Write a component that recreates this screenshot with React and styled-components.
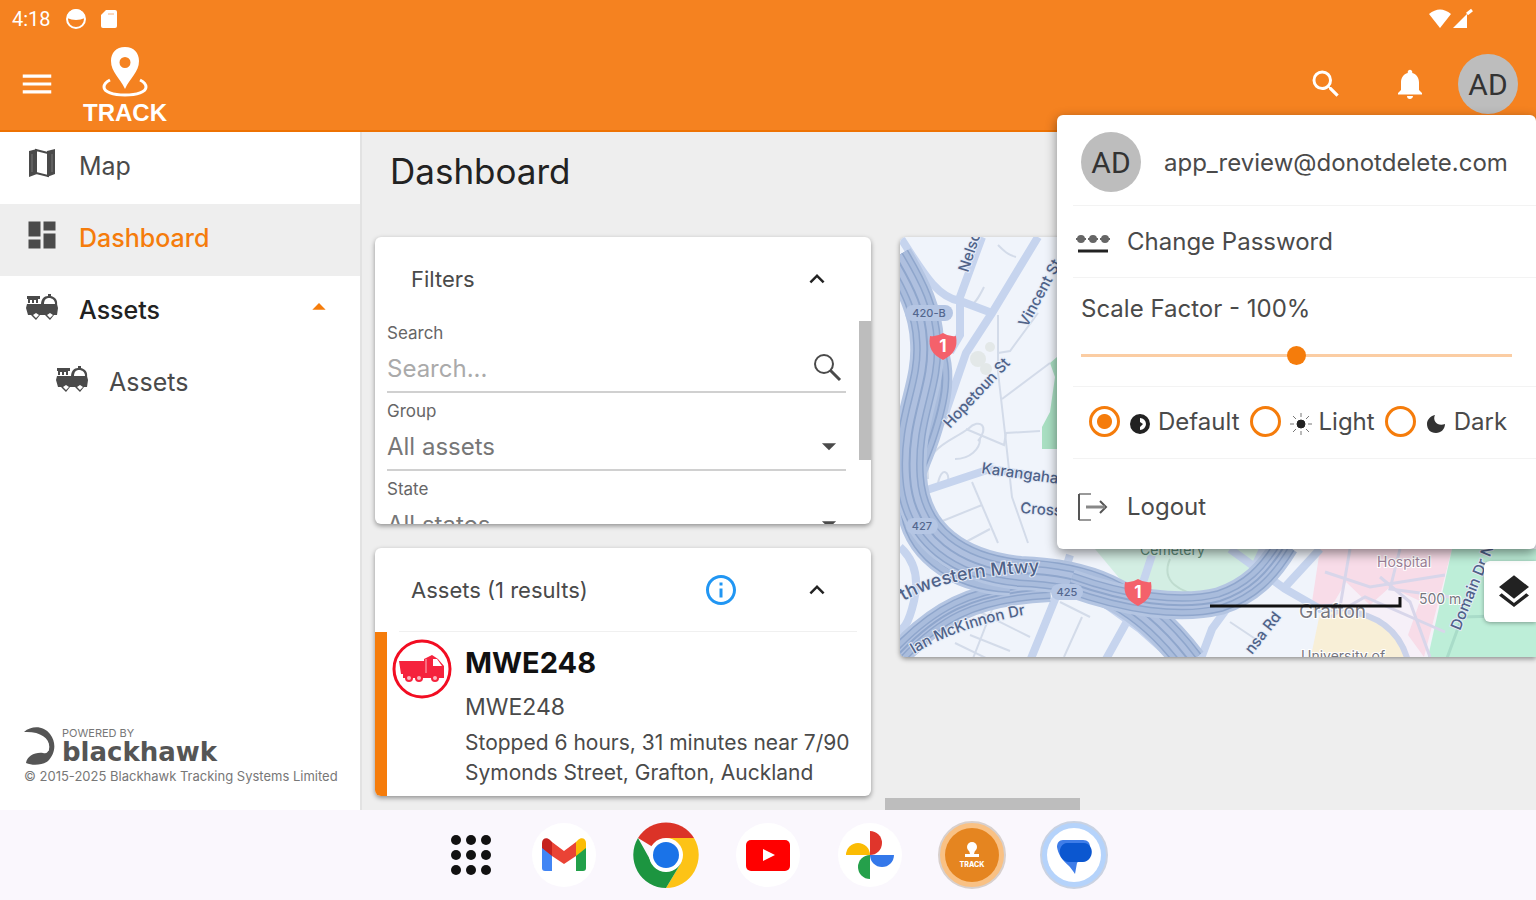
import React, { useState } from "react";

// Styled Components
import styled, { createGlobalStyle, css } from "styled-components";

// icons
import {
  MdMenu,
  MdSearch,
  MdNotifications,
  MdDashboard,
  MdArrowDropDown,
  MdArrowDropUp,
  MdKeyboardArrowUp,
  MdLayers,
  MdOutlineInfo,
} from "react-icons/md";

const GlobalStyle = createGlobalStyle`
  * {
    box-sizing: border-box;
  }
  body {
    margin: 0;
    background: #faf7fd;
    color: #4a4a4a;
    font-family: Inter, Roboto, "Liberation Sans", sans-serif;
  }
  button, input, select {
    font: inherit;
    color: inherit;
  }
  button {
    display: flex;
    align-items: center;
    padding: 0;
    border: 0;
    background: none;
    cursor: pointer;
  }
`;

const Screen = styled.div`
  display: flex;
  flex-direction: column;
  height: 100vh;
`;

// Header
const Header = styled.header`
  position: relative;
  z-index: 2;
  flex: none;
  background: #f58220;
  border-bottom: 2px solid #ee7203;
  color: #fff;
`;

const StatusBar = styled.div`
  display: flex;
  align-items: center;
  justify-content: space-between;
  height: 38px;
  padding: 0 62px 0 12px;
`;

const StatusGroup = styled.div`
  display: flex;
  align-items: center;
  gap: ${(props) => props.$gap || 0}px;
`;

const Clock = styled.span`
  font-family: Roboto, sans-serif;
  font-size: 20px;
`;

const AppBar = styled.div`
  display: flex;
  align-items: center;
  height: 92px;
  padding: 0 18px;
`;

const Brand = styled.a`
  display: flex;
  flex-direction: column;
  align-items: center;
  margin-left: 27px;
  padding-top: 4px;
  color: #fff;
  font-family: "Liberation Sans", sans-serif;
  font-size: 24px;
  font-weight: bold;
  line-height: 26px;
  text-decoration: none;
`;

const AppActions = styled.div`
  display: flex;
  align-items: center;
  gap: 48px;
  margin-left: auto;
`;

const Avatar = styled.span`
  display: flex;
  flex: none;
  align-items: center;
  justify-content: center;
  width: 60px;
  height: 60px;
  border-radius: 50%;
  background: #bdbdbd;
  color: #333;
  font-family: Roboto, sans-serif;
  font-size: 30px;
`;

// Account menu
const Menu = styled.div`
  position: absolute;
  top: 115px;
  right: 0;
  width: 479px;
  padding-left: 16px;
  border-radius: 6px;
  background: #fff;
  box-shadow: 0 4px 12px rgba(0, 0, 0, 0.45);
  color: #4a4a4a;
  font-size: 24px;
`;

const MenuSection = styled.div`
  display: flex;
  align-items: center;
  height: ${(props) => props.$height}px;
  padding: ${(props) => props.$top || 0}px 12px 0 8px;
  border-bottom: 1px solid #f3f3f3;
`;

const ScaleSection = styled(MenuSection)`
  flex-direction: column;
  align-items: stretch;
  gap: 22px;
  padding-right: 24px;
`;

const MenuButton = styled.button`
  gap: 16px;
  width: 100%;
  height: ${(props) => props.$height}px;
  padding-top: ${(props) => props.$top || 0}px;
  padding-left: 2px;
  border-bottom: ${(props) => (props.$last ? 0 : "1px solid #f3f3f3")};
`;

const Email = styled.span`
  margin-left: 23px;
`;

const Range = styled.input`
  appearance: none;
  width: 100%;
  height: 20px;
  margin: 0;
  background: linear-gradient(#fbcda3, #fbcda3) center / 100% 3px no-repeat;

  &::-webkit-slider-thumb {
    appearance: none;
    width: 19px;
    height: 19px;
    border-radius: 50%;
    background: #f57c0b;
  }
`;

const ThemeOptions = styled(MenuSection)`
  gap: 10px;
  padding: 0 0 2px 16px;
`;

const ThemeOption = styled.label`
  display: flex;
  align-items: center;

  svg {
    margin: 4px 7px 0 9px;
  }
`;

const Radio = styled.input`
  appearance: none;
  width: 31px;
  height: 31px;
  margin: 0;
  border: 3px solid #f57c0b;
  border-radius: 50%;

  &:checked {
    background: radial-gradient(#f57c0b 7px, #fff 8px);
  }
`;

// Body
const Body = styled.div`
  display: flex;
  flex: 1;
  min-height: 0;
`;

const Sidebar = styled.nav`
  display: flex;
  flex: none;
  flex-direction: column;
  width: 362px;
  border-right: 2px solid #e2e2e2;
  background: #fff;
`;

const NavItem = styled.a`
  display: flex;
  align-items: center;
  gap: 19px;
  height: 72px;
  padding: 0 25px 4px;
  padding-left: ${(props) => (props.$nested ? 54 : 24)}px;
  color: #4a4a4a;
  font-size: 25px;
  text-decoration: none;

  svg {
    flex: none;
    margin-bottom: 6px;
    color: #4a4a4a;
  }

  ${(props) =>
    props.$open &&
    css`
      color: #222;
      font-weight: 500;
    `}

  ${(props) =>
    props.$active &&
    css`
      background: #eee;
      color: #f57c0b;
      font-weight: 500;
    `}
`;

const NavArrow = styled.span`
  display: flex;
  margin-left: auto;

  svg {
    color: #f57c0b;
  }
`;

const Powered = styled.footer`
  margin-top: auto;
  padding: 0 20px 26px 24px;
  color: #777;
  font-size: 13px;
  line-height: 16px;
  white-space: nowrap;
`;

const PoweredBrand = styled.div`
  display: flex;
  align-items: center;
  gap: 6px;
  margin-bottom: 2px;
  font-size: 11px;
  line-height: 12px;
`;

const PoweredName = styled.strong`
  display: block;
  color: #555;
  font-family: "DejaVu Sans", sans-serif;
  font-size: 26px;
  line-height: 26px;
`;

const Main = styled.main`
  display: flex;
  flex: 1;
  flex-direction: column;
  min-width: 0;
  background: #eee;
`;

const Title = styled.h1`
  margin: 0;
  padding: 20px 28px 0;
  height: 105px;
  color: #222;
  font-size: 35px;
  font-weight: 400;
  line-height: 38px;
`;

const Columns = styled.div`
  display: flex;
  flex: 1;
  min-height: 0;
`;

const CardColumn = styled.div`
  display: flex;
  flex: none;
  flex-direction: column;
  gap: 24px;
  width: 523px;
  padding: 0 14px 14px 13px;
`;

const Card = styled.section`
  display: flex;
  flex-direction: column;
  flex: ${(props) => props.$grow} 1 0;
  overflow: hidden;
  border-radius: 6px;
  background: #fff;
  box-shadow: 0 2px 5px rgba(0, 0, 0, 0.4);
`;

const CardHeader = styled.div`
  display: flex;
  flex: none;
  align-items: center;
  height: 84px;
  padding: 0 39px 0 36px;
`;

const CardTitle = styled.h2`
  margin: 0;
  font-size: 22px;
  font-weight: 400;
`;

const CardActions = styled.div`
  display: flex;
  align-items: center;
  gap: 63px;
  margin-left: auto;
`;

const Divider = styled.hr`
  flex: none;
  height: 1px;
  width: auto;
  margin: -1px 14px 0 24px;
  border: 0;
  background: #f0f0f0;
`;

const InfoButton = styled.button`
  color: #2196f3;
`;

const CollapseButton = styled.button`
  color: #222;
`;

const FilterScroll = styled.div`
  display: flex;
  flex: 1;
  min-height: 0;
  padding-left: 12px;
`;

const Fields = styled.div`
  flex: 1;
  overflow: hidden;
`;

const ScrollThumb = styled.div`
  width: 12px;
  height: 139px;
  margin-left: 13px;
  background: #bdbdbd;
`;

const Field = styled.div`
  height: 78px;

  label {
    display: block;
    padding-top: 2px;
    color: #666;
    font-size: 17px;
    line-height: 20px;
  }
`;

const Control = styled.div`
  display: flex;
  align-items: center;
  height: 50px;
  padding-top: 2px;
  border-bottom: 2px solid #d0d0d0;

  input,
  select {
    flex: 1;
    min-width: 0;
    padding: 0;
    border: 0;
    outline: 0;
    appearance: none;
    background: none;
    color: #777;
    font-size: 24px;
  }

  input::placeholder {
    color: #aaa;
  }
`;

const AssetRow = styled.article`
  display: flex;
  flex: 1;
  gap: 13px;
  border-left: 12px solid #f57c0b;
  padding-left: 5px;
`;

const AssetIcon = styled.div`
  flex: none;
  padding-top: 7px;
`;

const AssetName = styled.h3`
  margin: 0;
  padding-top: 13px;
  color: #111;
  font-size: 29px;
  font-weight: 700;
  line-height: 36px;
`;

const AssetText = styled.p`
  margin: 0;
  padding-top: ${(props) => props.$top || 0}px;
  font-size: ${(props) => props.$size}px;
  line-height: 30px;
  white-space: nowrap;
`;

const MapColumn = styled.div`
  display: flex;
  flex: 1;
  flex-direction: column;
  min-width: 0;
`;

const MapPanel = styled.div`
  position: relative;
  height: 420px;
  margin-left: 15px;
  overflow: hidden;
  border-radius: 6px 0 0 6px;
  box-shadow: 0 2px 5px rgba(0, 0, 0, 0.4);
`;

const LayersButton = styled.button`
  position: absolute;
  right: 0;
  bottom: 35px;
  justify-content: center;
  width: 52px;
  height: 61px;
  padding-left: 8px;
  border-radius: 6px 0 0 6px;
  background: #fff;
  box-shadow: 0 1px 4px rgba(0, 0, 0, 0.35);
  color: #222;
`;

const HorizontalThumb = styled.div`
  width: 30%;
  height: 12px;
  margin-top: auto;
  background: #bdbdbd;
`;

// Dock
const Dock = styled.footer`
  display: flex;
  flex: none;
  align-items: center;
  justify-content: center;
  gap: 32px;
  height: 90px;
  padding-left: 18px;
`;

const DockButton = styled.button`
  justify-content: center;
  width: 70px;
  height: 70px;

  &:first-child {
    width: 52px;
  }
`;

const MapIcon = () => (
  <svg width="36" height="36" viewBox="0 0 36 36" fill="currentColor">
    <path d="M5 6l8-2v25l-8 3zM23 6l8-2v25l-8 3z" />
    <path d="M12 5l12 3v23l-12-3z" fill="none" stroke="currentColor" strokeWidth="2" />
    <path d="M8 9v18M28 9v18" stroke="#777" />
  </svg>
);

const TruckIcon = () => (
  <svg width="36" height="34" viewBox="0 0 36 34">
    <g fill="currentColor">
      <path d="M3 6h13v3h-2v4h-2v-3h-2v3H8v-3H6v3H4V9H3z" />
      <path d="M17 15c0-6 3-9 7-9V4h3v2c4 1 7 4 6 9z" />
      <path d="M3 14h30l1 4-1 7h-3l-4 5-5-5h-5l-4 5-5-5H4L2 18z" />
    </g>
    <path d="M20 14c0-4 2-6 5-6s6 2 6 6z" fill="#fff" />
    <path d="M9 25l3-2 3 2-3 3zM23 25l3-2 3 2-3 3z" fill="#fff" />
  </svg>
);

const TrackLogo = () => (
  <svg width="46" height="54" viewBox="0 0 46 54" fill="#fff">
    <path fillRule="evenodd" d="M23 1C14 1 9 7 9 15c0 11 9 17 14 28 5-11 14-17 14-28C37 7 32 1 23 1zm0 10a5 5 0 1 1 0 11 5 5 0 0 1 0-11z" />
    <path d="M8 34c-4 2-6 4-6 7 0 5 9 8 21 8s21-3 21-8c0-3-2-5-6-7" fill="none" stroke="#fff" strokeWidth="3" />
  </svg>
);

const PasswordIcon = () => (
  <svg width="36" height="36" viewBox="0 0 36 36" fill="#666">
    <circle cx="6" cy="15" r="4" />
    <circle cx="18" cy="15" r="4" />
    <circle cx="30" cy="15" r="4" />
    <path d="M1 15h10M13 15h10M25 15h10" stroke="#666" strokeWidth="2" />
    <path d="M3 27h30" stroke="#222" strokeWidth="3" />
  </svg>
);

const LogoutIcon = () => (
  <svg width="36" height="32" viewBox="0 0 36 32" fill="none" stroke="#555">
    <path d="M16 3H4M16 29H4" stroke="#999" strokeWidth="2" />
    <path d="M4 3v26M25 10l6 6-6 6" strokeWidth="2" />
    <path d="M11 16h19" stroke="#888" strokeWidth="3" />
  </svg>
);

const FieldSearchIcon = () => (
  <svg width="36" height="36" viewBox="0 0 36 36" fill="none" stroke="#4a4a4a">
    <circle cx="14" cy="14" r="9" strokeWidth="2" />
    <path d="M20 20l10 10" strokeWidth="3" />
  </svg>
);

const HawkLogo = () => (
  <svg width="32" height="40" viewBox="0 0 32 40" fill="#555">
    <path d="M0 6C8-1 20 0 26 8c7 9 5 20-2 27-5 4-15 5-22 2 1-7 9-11 17-10 4 1 5-1 6-4C27 13 17 5 0 6z" />
    <path d="M15 10c8 3 11 9 9 15" fill="none" stroke="#fff" />
  </svg>
);

const AssetBadge = () => (
  <svg width="60" height="60" viewBox="0 0 60 60">
    <circle cx="30" cy="30" r="28" fill="#fff" stroke="#f20d22" strokeWidth="3" />
    <g fill="#f5233d">
      <path d="M7 22h26v13H9zM34 19l6-3 6 4 6 7v11H32V20z" />
      <path d="M11 34h41v5H11z" />
      <circle cx="17" cy="39" r="4" />
      <circle cx="27" cy="39" r="4" />
      <circle cx="43" cy="39" r="4" />
    </g>
    <path d="M41 20h4l5 7h-9z" fill="#fff" />
    <path d="M34 20v14" stroke="#fbb6bf" />
    <g fill="#fbb6bf">
      <circle cx="17" cy="39" r="2" />
      <circle cx="27" cy="39" r="2" />
      <circle cx="43" cy="39" r="2" />
    </g>
  </svg>
);

const themeIcons = {
  Default: (
    <svg width="22" height="22" viewBox="0 0 22 22">
      <circle cx="11" cy="11" r="8" fill="#fff" stroke="#222" strokeWidth="4" />
      <path d="M11 3v6l3 2-3 3v5A8 8 0 0 1 11 3z" fill="#222" />
    </svg>
  ),
  Light: (
    <svg width="22" height="22" viewBox="0 0 22 22" stroke="#777" strokeWidth="1">
      <circle cx="11" cy="11" r="4" fill="#222" stroke="#222" />
      <path d="M11 0v4M11 18v4M0 11h4M18 11h4M3 3l3 3M16 16l3 3M3 19l3-3M16 6l3-3" />
    </svg>
  ),
  Dark: (
    <svg width="22" height="22" viewBox="0 0 22 22">
      <path d="M10 2C7 8 13 14 20 11c0 5-4 9-9 9-6 0-9-4-9-9 0-4 3-8 8-9z" fill="#333" />
    </svg>
  ),
};

const Shield = ({ x, y }) => (
  <g transform={`translate(${x} ${y})`}>
    <path d="M-13-10q7 1 13-3 6 4 13 3c2 12-2 18-13 24C-11 8-15 2-13-10z" fill="#f4616b" />
    <text y="6" textAnchor="middle" fill="#fff" fontSize="17" fontWeight="700">1</text>
  </g>
);

const RoadBadge = ({ x, y, label }) => (
  <g transform={`translate(${x} ${y})`}>
    <rect x={-label.length * 4 - 4} y="-8" width={label.length * 8 + 8} height="16" rx="8" fill="#b5c6e4" />
    <text y="4" textAnchor="middle" fill="#53678f" fontSize="11" fontWeight="500">{label}</text>
  </g>
);

// width is the full width of the carriageways, ramps are the narrow ones
const motorways = [
  { d: "M30 96C52 130 40 170 30 200S14 235 12 260", width: 20 },
  { d: "M0 190C-2 230 0 250 6 280", width: 16 },
  { d: "M-4 420C35 378 70 356 150 352", width: 26 },
  { d: "M8 270C10 310 50 346 110 348", width: 22 },
  { d: "M-4 20C14 50 26 75 27 105C30 150 6 180 10 240C14 300 60 330 120 336C180 338 235 352 290 425", width: 34 },
  { d: "M170 346C226 366 280 374 320 364C350 354 368 336 385 308", width: 28 },
];

const streets = [
  "M0 0C20 30 35 60 60 64L92 76",
  "M82 0L60 60V98L50 115",
  "M138 0L92 76L66 116L44 180L28 206",
  "M0 262L90 232L130 238",
  "M170 318L160 350L130 424",
  "M252 318L235 370L205 424",
  "M300 424L312 392L350 340L364 310",
  "M330 312L385 352L420 372L440 370",
  "M420 312L385 350",
  "M190 356L240 392L276 424",
  "M0 310Q22 330 14 364T-4 392",
];

const lanes = [
  "M98 78V135L106 205L112 260L128 306",
  "M102 162L150 126", "M98 116L110 114L138 76",
  "M66 192L104 208L106 196L140 194", "M28 242C24 210 50 205 68 192C80 180 90 190 78 204",
  "M72 245L98 306", "M40 285L82 268", "M60 308L90 292",
  "M98 8C104 14 108 18 116 20", "M84 50C78 62 74 68 70 68",
  "M38 246C42 228 50 236 48 244", "M55 222C70 222 80 212 80 202",
  "M80 375L130 400", "M70 398L110 414", "M55 406L88 422", "M160 365L190 380", "M182 380L164 420",
  "M95 365L72 424", "M330 385L360 405",
];

const hospitalLanes = [
  "M425 335L470 350L545 338", "M450 312L440 370", "M480 340L510 365L530 420", "M500 312L490 352L550 360", "M430 380L465 360L545 395",
];

const CityMap = () => (
  <svg width="100%" height="100%" viewBox="0 0 636 420" preserveAspectRatio="xMinYMid slice" fontFamily="Inter, sans-serif">
    <rect width="636" height="420" fill="#f0f4fb" />
    <path d="M185 300H365L348 340L310 360L240 366Z" fill="#d3eee3" />
    <path d="M270 322C260 345 280 355 305 360" fill="none" stroke="#bfdccf" strokeWidth="2" />
    <path d="M157 120L150 126L155 140L150 175L142 190V212H157Z" fill="#a9dfc2" />
    <path d="M420 312H556L526 420H420Z" fill="#f6f0f8" />
    <path d="M420 312L412 365L430 372L446 345L470 368L490 350L520 364L508 398L524 420L552 312Z" fill="#f8dce8" />
    <path d="M552 312H636V420H528Z" fill="#bdeed8" />
    <path d="M420 376Q442 368 480 382Q502 398 508 424H410Z" fill="#f8efd7" />
    <path d="M546 424L562 380L636 378" fill="none" stroke="#a9dcc9" strokeWidth="3" />
    <g fill="#e3e8e8">
      <circle cx="78" cy="122" r="8" />
      <circle cx="90" cy="110" r="5" />
      <circle cx="86" cy="132" r="6" />
    </g>
    {lanes.map((d) => (
      <path key={d} d={d} fill="none" stroke="#d3dbe9" strokeWidth="2" />
    ))}
    {hospitalLanes.map((d) => (
      <path key={d} d={d} fill="none" stroke="#d8d6ea" strokeWidth="3" />
    ))}
    {streets.map((d) => (
      <path key={d} d={d} fill="none" stroke="#c6d4ee" strokeWidth="8" />
    ))}
    <path d="M446 374Q496 380 508 424" fill="none" stroke="#cbd3ea" strokeWidth="6" />
    {motorways.map(({ d, width }) => (
      <g key={d} fill="none">
        <path d={d} stroke="#b4c5e2" strokeWidth={width} />
        <path d={d} stroke="#8fa6cc" strokeWidth={width - 6} />
        <path d={d} stroke="#a9bcdc" strokeWidth={width - 9} />
        {width > 24 && <path d={d} stroke="#8fa6cc" strokeWidth={width - 18} />}
        {width > 24 && <path d={d} stroke="#afc0df" strokeWidth={width - 21} />}
        <path d={d} stroke="#8fa6cc" strokeWidth="2" />
      </g>
    ))}
    <g fill="#4f6288" fontSize="15" fontWeight="500" stroke="#e4ebf7" strokeWidth="2" paintOrder="stroke">
      <text transform="translate(68 36) rotate(-72)">Nelson St</text>
      <text transform="translate(127 91) rotate(-62)">Vincent St</text>
      <text transform="translate(50 192) rotate(-47)">Hopetoun St</text>
      <text transform="translate(81 236) rotate(8)">Karangahape Rd</text>
      <text transform="translate(120 276) rotate(4)">Cross St</text>
      <path id="nw" d="M4 364Q50 336 160 335" fill="none" stroke="none" />
      <text fontSize="18"><textPath href="#nw">thwestern Mtwy</textPath></text>
      <path id="mckinnon" d="M14 417Q66 385 150 374" fill="none" stroke="none" />
      <text><textPath href="#mckinnon">Ian McKinnon Dr</textPath></text>
      <text transform="translate(352 418) rotate(-52)">nsa Rd</text>
      <text transform="translate(560 394) rotate(-68)">Domain Dr N</text>
    </g>
    <g fill="#77777f" fontSize="15" stroke="#fff" strokeWidth="2" paintOrder="stroke">
      <text x="240" y="318" fontSize="14" fill="#5c8a78" stroke="#d3eee3">Cemetery</text>
      <text x="477" y="330" fontSize="14" fill="#9c7f96">Hospital</text>
      <text x="399" y="381" fontSize="19">Grafton</text>
      <text x="401" y="424" fontSize="14">University of</text>
      <text x="519" y="367" fontSize="14">500 m</text>
    </g>
    <RoadBadge x={29} y={76} label="420-B" />
    <RoadBadge x={22} y={289} label="427" />
    <RoadBadge x={167} y={355} label="425" />
    <Shield x={43} y={109} />
    <Shield x={238} y={355} />
    <path d="M310 369H500V360" fill="none" stroke="#111" strokeWidth="3" />
  </svg>
);

// Dock icons
const AppsIcon = () => (
  <svg width="42" height="42" viewBox="0 0 42 42" fill="#111">
    {[6, 21, 36].map((y) => [6, 21, 36].map((x) => <circle key={`${x}-${y}`} cx={x} cy={y} r="5" />))}
  </svg>
);

const GmailIcon = () => (
  <svg width="66" height="66" viewBox="0 0 66 66">
    <circle cx="33" cy="33" r="32" fill="#fff" />
    <path d="M11 23v23q0 3 3 3h7V28z" fill="#4285f4" />
    <path d="M55 23v23q0 3-3 3h-7V28z" fill="#22a04a" />
    <path d="M45 20v14l10-8v-5c0-5-5-6-8-3z" fill="#fbbc04" />
    <path d="M21 20v14l12 8 12-8V20l-12 9z" fill="#ea4335" />
    <path d="M21 20v14l-10-8v-5c0-5 5-6 8-3z" fill="#c5221f" />
  </svg>
);

const ChromeIcon = () => (
  <svg width="68" height="68" viewBox="0 0 68 68">
    <path d="M34 34L6 17A33 33 0 0 1 62 17z" fill="#db3328" />
    <path d="M34 17h28A33 33 0 0 1 34 67L49 42z" fill="#fdc316" />
    <path d="M6 17L20 42 34 51 49 42 34 67A33 33 0 0 1 6 17z" fill="#1c9540" />
    <circle cx="34" cy="34" r="17" fill="#fff" />
    <circle cx="34" cy="34" r="13" fill="#1a73e8" />
  </svg>
);

const YoutubeIcon = () => (
  <svg width="66" height="66" viewBox="0 0 66 66">
    <circle cx="33" cy="33" r="32" fill="#fff" />
    <rect x="11" y="18" width="44" height="31" rx="5" fill="#f00" />
    <path d="M28 27l12 6-12 6z" fill="#fff" />
  </svg>
);

const PhotosIcon = () => (
  <svg width="66" height="66" viewBox="0 0 66 66">
    <circle cx="33" cy="33" r="32" fill="#fff" />
    <path d="M33 33V9a12 12 0 0 1 0 24z" fill="#e0352b" />
    <path d="M33 33h24a12 12 0 0 1-24 0z" fill="#3478ea" />
    <path d="M33 33v24a12 12 0 0 1 0-24z" fill="#25a04b" />
    <path d="M33 33H9a12 12 0 0 1 24 0z" fill="#fbbc04" />
  </svg>
);

const TrackAppIcon = () => (
  <svg width="70" height="70" viewBox="0 0 70 70">
    <circle cx="35" cy="35" r="33" fill="#f9c184" stroke="#d8d0cd" strokeWidth="2" />
    <circle cx="35" cy="35" r="27" fill="#e58520" />
    <circle cx="35" cy="27" r="5" fill="#fff" />
    <path d="M31 27h8l-2 7h5v3H28v-3h5z" fill="#fff" />
    <text x="35" y="47" textAnchor="middle" fill="#fff" fontSize="7" fontWeight="800">TRACK</text>
  </svg>
);

const MessagesIcon = () => (
  <svg width="70" height="70" viewBox="0 0 70 70">
    <circle cx="35" cy="35" r="33" fill="#b5d3fb" stroke="#c9d2e2" strokeWidth="2" />
    <circle cx="35" cy="35" r="27" fill="#fff" />
    <path d="M24 20h20c5 0 7 3 7 7L38 43l-2 11c-2-3-4-6-6-8-7-6-11-12-12-19 0-4 2-7 6-7z" fill="#3f7de8" />
    <path d="M28 23h17c11 1 10 18-1 19H30c-12-1-12-18-2-19z" fill="#0b57d0" />
  </svg>
);

const dockApps = [
  { name: "All apps", icon: <AppsIcon /> },
  { name: "Gmail", icon: <GmailIcon /> },
  { name: "Chrome", icon: <ChromeIcon /> },
  { name: "YouTube", icon: <YoutubeIcon /> },
  { name: "Photos", icon: <PhotosIcon /> },
  { name: "Track", icon: <TrackAppIcon /> },
  { name: "Messages", icon: <MessagesIcon /> },
];

const AccountMenu = () => {
  const [scale, setScale] = useState(100);
  const [theme, setTheme] = useState("Default");

  return (
    <Menu>
      <MenuSection $height={91} $top={4}>
        <Avatar>AD</Avatar>
        <Email>app_review@donotdelete.com</Email>
      </MenuSection>
      <MenuButton $height={72}>
        <PasswordIcon />
        Change Password
      </MenuButton>
      <ScaleSection $height={109} $top={16}>
        <label htmlFor="scale">Scale Factor - {scale}%</label>
        <Range
          id="scale"
          type="range"
          min="50"
          max="150"
          value={scale}
          onChange={(event) => setScale(Number(event.target.value))}
        />
      </ScaleSection>
      <ThemeOptions $height={72}>
        {Object.keys(themeIcons).map((name) => (
          <ThemeOption key={name}>
            <Radio type="radio" name="theme" checked={theme === name} onChange={() => setTheme(name)} />
            {themeIcons[name]}
            {name}
          </ThemeOption>
        ))}
      </ThemeOptions>
      <MenuButton $height={90} $top={5} $last>
        <LogoutIcon />
        Logout
      </MenuButton>
    </Menu>
  );
};

const App = () => {
  const [search, setSearch] = useState("");

  return (
    <Screen>
      <GlobalStyle />
      <Header>
        <StatusBar>
          <StatusGroup $gap={14}>
            <Clock>4:18</Clock>
            <svg width="22" height="22" viewBox="0 0 22 22">
              <circle cx="11" cy="11" r="9" fill="none" stroke="#fff" strokeWidth="2" />
              <path d="M2 10a9 9 0 0 1 18 0q-9 4-18 0z" fill="#fff" />
            </svg>
            <svg width="16" height="20" viewBox="0 0 16 20">
              <path d="M5 1h9q2 0 2 2v14q0 2-2 2H2q-2 0-2-2V6z" fill="#fff" />
              <path d="M7 5h6" stroke="#f8b078" />
            </svg>
          </StatusGroup>
          <StatusGroup>
            <svg width="24" height="22" viewBox="0 0 24 22">
              <path d="M1 6Q12-3 23 6L12 20z" fill="#fff" />
            </svg>
            <svg width="22" height="22" viewBox="0 0 22 22">
              <path d="M1 20L15 6v14z" fill="#fff" />
              <path d="M15 6l5-4" stroke="#fff" strokeWidth="3" />
            </svg>
          </StatusGroup>
        </StatusBar>
        <AppBar>
          <button aria-label="Open navigation">
            <MdMenu size={38} />
          </button>
          <Brand href="#">
            <TrackLogo />
            TRACK
          </Brand>
          <AppActions>
            <button aria-label="Search">
              <MdSearch size={36} />
            </button>
            <StatusGroup $gap={30}>
              <button aria-label="Notifications">
                <MdNotifications size={36} />
              </button>
              <button aria-label="Account">
                <Avatar>AD</Avatar>
              </button>
            </StatusGroup>
          </AppActions>
        </AppBar>
        <AccountMenu />
      </Header>

      <Body>
        <Sidebar>
          <NavItem href="#map">
            <MapIcon />
            Map
          </NavItem>
          <NavItem href="#dashboard" $active>
            <MdDashboard size={36} />
            Dashboard
          </NavItem>
          <NavItem href="#assets" $open>
            <TruckIcon />
            Assets
            <NavArrow>
              <MdArrowDropUp size={32} />
            </NavArrow>
          </NavItem>
          <NavItem href="#assets-list" $nested>
            <TruckIcon />
            Assets
          </NavItem>
          <Powered>
            <PoweredBrand>
              <HawkLogo />
              <div>
                POWERED BY
                <PoweredName>blackhawk</PoweredName>
              </div>
            </PoweredBrand>
            © 2015-2025 Blackhawk Tracking Systems Limited
          </Powered>
        </Sidebar>

        <Main>
          <Title>Dashboard</Title>
          <Columns>
            <CardColumn>
              <Card $grow={288}>
                <CardHeader>
                  <CardTitle>Filters</CardTitle>
                  <CardActions>
                    <CollapseButton aria-label="Collapse filters">
                      <MdKeyboardArrowUp size={30} />
                    </CollapseButton>
                  </CardActions>
                </CardHeader>
                <FilterScroll>
                  <Fields>
                    <Field>
                      <label htmlFor="search">Search</label>
                      <Control>
                        <input
                          id="search"
                          placeholder="Search..."
                          value={search}
                          onChange={(event) => setSearch(event.target.value)}
                        />
                        <FieldSearchIcon />
                      </Control>
                    </Field>
                    <Field>
                      <label htmlFor="group">Group</label>
                      <Control>
                        <select id="group">
                          <option>All assets</option>
                        </select>
                        <MdArrowDropDown size={34} />
                      </Control>
                    </Field>
                    <Field>
                      <label htmlFor="state">State</label>
                      <Control>
                        <select id="state">
                          <option>All states</option>
                        </select>
                        <MdArrowDropDown size={34} />
                      </Control>
                    </Field>
                  </Fields>
                  <ScrollThumb />
                </FilterScroll>
              </Card>

              <Card $grow={248}>
                <CardHeader>
                  <CardTitle>Assets (1 results)</CardTitle>
                  <CardActions>
                    <InfoButton aria-label="Information">
                      <MdOutlineInfo size={36} />
                    </InfoButton>
                    <CollapseButton aria-label="Collapse assets">
                      <MdKeyboardArrowUp size={30} />
                    </CollapseButton>
                  </CardActions>
                </CardHeader>
                <Divider />
                <AssetRow>
                  <AssetIcon>
                    <AssetBadge />
                  </AssetIcon>
                  <div>
                    <AssetName>MWE248</AssetName>
                    <AssetText $size={23} $top={11}>MWE248</AssetText>
                    <AssetText $size={21} $top={6}>
                      Stopped 6 hours, 31 minutes near 7/90
                      <br />
                      Symonds Street, Grafton, Auckland
                    </AssetText>
                  </div>
                </AssetRow>
              </Card>
            </CardColumn>

            <MapColumn>
              <MapPanel>
                <CityMap />
                <LayersButton aria-label="Map layers">
                  <MdLayers size={40} />
                </LayersButton>
              </MapPanel>
              <HorizontalThumb />
            </MapColumn>
          </Columns>
        </Main>
      </Body>

      <Dock>
        {dockApps.map((app) => (
          <DockButton key={app.name} aria-label={app.name}>
            {app.icon}
          </DockButton>
        ))}
      </Dock>
    </Screen>
  );
};

export default App;
